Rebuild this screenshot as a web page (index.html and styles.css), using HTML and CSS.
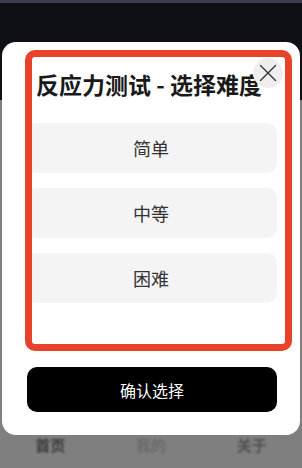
FILE: index.html
```html
<!DOCTYPE html>
<html lang="zh-CN">
<head>
<meta charset="utf-8">
<title>反应力测试</title>
<link rel="stylesheet" href="styles.css">
</head>
<body>
<div class="page">
  <header class="header"></header>
  <main class="content"></main>
  <nav class="tabbar">
    <span class="tab tab-active">首页</span>
    <span class="tab tab-mid">我的</span>
    <span class="tab">关于</span>
  </nav>

  <div class="modal">
    <h2 class="title">反应力测试 - 选择难度</h2>
    <div class="options">
      <div class="option">简单</div>
      <div class="option">中等</div>
      <div class="option">困难</div>
    </div>
    <button class="confirm">确认选择</button>

    <button class="close" aria-label="关闭">
      <svg width="18" height="18" viewBox="0 0 18 18"><path d="M1.5 1.5 L16.5 16.5 M16.5 1.5 L1.5 16.5" stroke="#333" stroke-width="1.4" fill="none" stroke-linecap="round"/></svg>
    </button>
    <div class="highlight"></div>
  </div>
</div>
</body>
</html>
```

FILE: styles.css
```css
* { box-sizing: border-box; }
html, body { margin: 0; padding: 0; }
body {
  width: 302px;
  height: 468px;
  overflow: hidden;
  font-family: "Noto Sans CJK SC", "Noto Sans", sans-serif;
  background: #7f7f7f;
}
.page {
  position: relative;
  width: 302px;
  height: 468px;
  display: flex;
  flex-direction: column;
}
.header {
  height: 100px;
  background: #0f0f16;
  border-top: 3px solid #3a3d4c;
}
.content { flex: 1; }
.tabbar {
  height: 50px;
  display: flex;
  align-items: center;
  padding-top: 2px;
}
.tab {
  flex: 1;
  text-align: center;
  font-size: 15px;
  font-weight: 700;
  color: #505050;
  filter: blur(1.2px);
}
.tab-active { color: #3a3a3a; }
.tab-mid { color: #606060; font-weight: 400; }

.modal {
  position: absolute;
  left: 2px;
  top: 42px;
  width: 298px;
  height: 393px;
  background: #fff;
  border-radius: 14px;
  padding: 27px 23px 23px;
  display: flex;
  flex-direction: column;
}
.title {
  margin: 0;
  padding-left: 11px;
  font-size: 23px;
  line-height: 30px;
  font-weight: 700;
  color: #1a1a1a;
  white-space: nowrap;
}
.options {
  margin-top: 24px;
  display: flex;
  flex-direction: column;
  gap: 15px;
}
.option {
  height: 50px;
  border-radius: 10px;
  background: #f4f4f4;
  display: flex;
  align-items: center;
  justify-content: center;
  font-size: 18px;
  color: #333;
}
.confirm {
  margin-top: auto;
  margin-left: 2px;
  height: 45px;
  border: none;
  border-radius: 10px;
  background: #000;
  color: #fff;
  font-family: inherit;
  font-size: 16px;
}
.close {
  position: absolute;
  left: 251px;
  top: 16px;
  width: 30px;
  height: 30px;
  border: none;
  border-radius: 50%;
  background: #eeeeee;
  padding: 0;
  display: flex;
  align-items: center;
  justify-content: center;
}
.highlight {
  position: absolute;
  left: 23px;
  top: 8px;
  width: 267px;
  height: 301px;
  border: 7px solid #e8432a;
  border-radius: 10px;
  pointer-events: none;
}
```
